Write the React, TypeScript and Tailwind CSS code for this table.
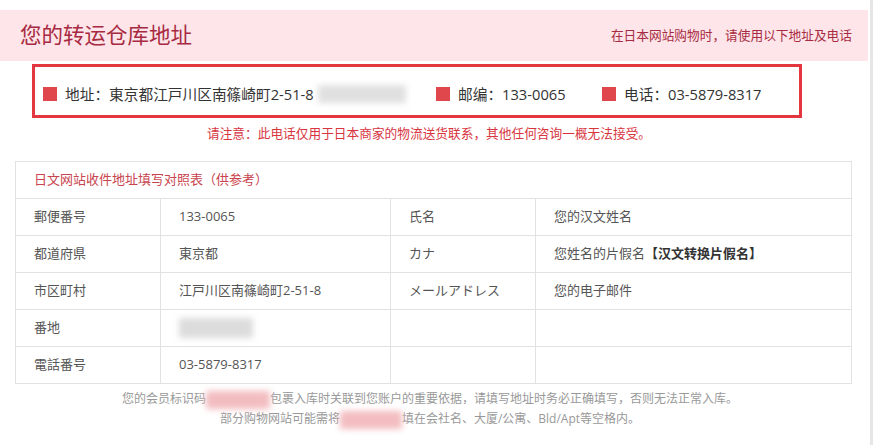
import React from 'react';

const font = { fontFamily: '"Open Sans", "Noto Sans CJK SC", sans-serif' };

const rows: [string, React.ReactNode, string, React.ReactNode][] = [
  ['郵便番号', '133-0065', '氏名', '您的汉文姓名'],
  ['都道府県', '東京都', 'カナ', (
    <span>
      您姓名的片假名<b className="font-bold text-[#333]">【汉文转换片假名】</b>
    </span>
  )],
  ['市区町村', '江戸川区南篠崎町2-51-8', 'メールアドレス', '您的电子邮件'],
  ['番地', <span className="inline-block w-[74px] h-[20px] bg-[#dcdcdc] blur-[3px] align-middle" />, '', ''],
  ['電話番号', '03-5879-8317', '', ''],
];

function Marker() {
  return <span className="inline-block w-[14px] h-[14px] bg-[#e0474d] mr-[8px] shrink-0" />;
}

export default function App() {
  return (
    <div className="flex w-full min-h-[445px] bg-white text-[#555]" style={font}>
      <div className="flex-1 pt-[10px]">
        <div className="h-[51px] mr-[2px] bg-[#fde5e9] flex items-center justify-between pl-[20px] pr-[16px]">
          <h1 className="text-[21.5px] leading-none text-[#a82a42] pb-[2px]">您的转运仓库地址</h1>
          <p className="text-[12.7px] leading-none text-[#a82a42]">在日本网站购物时，请使用以下地址及电话</p>
        </div>

        <div className="mt-[3px] ml-[32px] w-[770px] h-[54px] border-[3px] border-[#e3363e] flex items-center pl-[8px] pt-[5px] text-[14.7px] text-[#333] leading-[20px]">
          <div className="w-[393px] flex items-center">
            <Marker />
            <span>地址：東京都江戸川区南篠崎町2-51-8</span>
            <span className="inline-block ml-[4px] w-[88px] h-[18px] bg-[#e0e0e0] blur-[3px]" />
          </div>
          <div className="w-[166px] flex items-center">
            <Marker />
            <span>邮编：133-0065</span>
          </div>
          <div className="flex items-center">
            <Marker />
            <span>电话：03-5879-8317</span>
          </div>
        </div>

        <p className="w-[858px] mt-[5px] text-center text-[12.7px] leading-[20px] text-[#d8353f]">
          请注意：此电话仅用于日本商家的物流送货联系，其他任何咨询一概无法接受。
        </p>

        <div className="mt-[18px] ml-[15px] w-[837px] border-l border-t border-[#e2e2e2] text-[13px]">
          <div className="h-[37px] border-r border-b border-[#e2e2e2] flex items-center pl-[18px] text-[#c9444e]">
            日文网站收件地址填写对照表（供参考）
          </div>
          {rows.map((r, i) => (
            <div key={i} className="grid grid-cols-[145px_230px_145px_1fr]">
              {r.map((c, j) => (
                <div key={j} className="h-[37px] border-r border-b border-[#e2e2e2] flex items-center pl-[18px] whitespace-nowrap">
                  {c}
                </div>
              ))}
            </div>
          ))}
        </div>

        <div className="w-[860px] mt-[5px] text-center text-[12px] leading-[20px] text-[#999]">
          <p>
            您的会员标识码<span className="inline-block w-[64px] h-[18px] bg-[#f3bcc0] blur-[3px] align-middle" />包裹入库时关联到您账户的重要依据，请填写地址时务必正确填写，否则无法正常入库。
          </p>
          <p>
            部分购物网站可能需将<span className="inline-block w-[62px] h-[18px] bg-[#f3bcc0] blur-[3px] align-middle" />填在会社名、大厦/公寓、Bld/Apt等空格内。
          </p>
        </div>
      </div>
      <div className="w-[3px] bg-[#e6e6e6]" />
    </div>
  );
}
